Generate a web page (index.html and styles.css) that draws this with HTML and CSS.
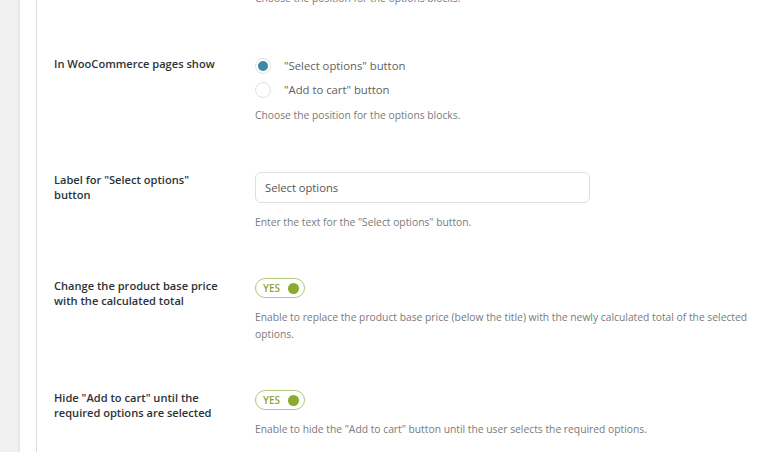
FILE: index.html
```html
<!DOCTYPE html>
<html>
<head>
<meta charset="utf-8">
<link rel="stylesheet" href="styles.css">
</head>
<body>
<div class="page">
  <div class="sidebar"></div>
  <div class="gutter"></div>
  <div class="panel">
    <div class="row first">
      <div class="label"></div>
      <div class="field">
        <p class="desc">Choose the position for the options blocks.</p>
      </div>
    </div>
    <div class="row second">
      <div class="label">In WooCommerce pages show</div>
      <div class="field">
        <div class="radios">
          <div class="radio-item"><span class="radio checked"></span><span class="radio-text">"Select options" button</span></div>
          <div class="radio-item"><span class="radio"></span><span class="radio-text">"Add to cart" button</span></div>
        </div>
        <p class="desc">Choose the position for the options blocks.</p>
      </div>
    </div>
    <div class="row after-radios">
      <div class="label">Label for "Select options" button</div>
      <div class="field">
        <div class="input">Select options</div>
        <p class="desc">Enter the text for the "Select options" button.</p>
      </div>
    </div>
    <div class="row">
      <div class="label">Change the product base price with the calculated total</div>
      <div class="field">
        <div class="toggle"><span class="toggle-text">YES</span><span class="toggle-dot"></span></div>
        <p class="desc">Enable to replace the product base price (below the title) with the newly calculated total of the selected options.</p>
      </div>
    </div>
    <div class="row">
      <div class="label">Hide "Add to cart" until the required options are selected</div>
      <div class="field">
        <div class="toggle"><span class="toggle-text">YES</span><span class="toggle-dot"></span></div>
        <p class="desc">Enable to hide the "Add to cart" button until the user selects the required options.</p>
      </div>
    </div>
  </div>
</div>
</body>
</html>
```
FILE: styles.css
```css
html, body {
  margin: 0;
  padding: 0;
  background: #ffffff;
  overflow: hidden;
}
body {
  font-family: "Open Sans", "Noto Sans", sans-serif;
  width: 769px;
  height: 452px;
}
.page {
  display: flex;
  height: 452px;
}
.sidebar {
  width: 18px;
  background: #f0f0f1;
  border-right: 2px solid #e8e8e9;
  flex: none;
}
.gutter {
  width: 16px;
  background: #ffffff;
  flex: none;
}
.panel {
  flex: 1;
  border-left: 1px solid #dcdcde;
  padding-left: 17px;
  padding-right: 10px;
}
.row {
  display: flex;
  padding-top: 47px;
}
.row.first {
  padding-top: 0;
  margin-top: -10px;
}
.row.second {
  padding-top: 49px;
}
.row.after-radios {
  padding-top: 48.5px;
}
.label {
  width: 172px;
  margin-right: 29px;
  flex: none;
  font-size: 11.1px;
  font-weight: 600;
  line-height: 15px;
  color: #2c3338;
}
.field {
  flex: 1;
}
.desc {
  margin: 11px 0 0;
  font-size: 10.3px;
  line-height: 17px;
  color: #7a7a7a;
}
.row.first .desc {
  margin-top: 0;
}
.radios + .desc {
  margin-top: 9px;
}
.radios {
  display: flex;
  flex-direction: column;
  gap: 8px;
  padding-top: 1.5px;
}
.radio-item {
  display: flex;
  align-items: center;
  height: 16px;
}
.radio {
  width: 14px;
  height: 14px;
  border: 1px solid #e2e2e2;
  border-radius: 50%;
  background: #fff;
  position: relative;
  flex: none;
}
.radio.checked::after {
  content: "";
  position: absolute;
  left: 2px;
  top: 2px;
  width: 10px;
  height: 10px;
  border-radius: 50%;
  background: #3f89a5;
}
.radio-text {
  margin-left: 13px;
  font-size: 11.3px;
  color: #5e5e5e;
}
.input {
  box-sizing: border-box;
  width: 335px;
  height: 31px;
  border: 1px solid #dedede;
  border-radius: 6px;
  padding-left: 9px;
  display: flex;
  align-items: center;
  font-size: 11.2px;
  color: #555;
}
.toggle {
  box-sizing: border-box;
  width: 50px;
  height: 20px;
  border: 1px solid #b3c97b;
  border-radius: 10px;
  display: flex;
  align-items: center;
  padding-left: 7px;
  padding-right: 5px;
  justify-content: space-between;
}
.toggle-text {
  font-size: 10px;
  font-weight: 600;
  color: #8aa63a;
}
.toggle-dot {
  width: 11px;
  height: 11px;
  border-radius: 50%;
  background: #8aab2e;
}
```
